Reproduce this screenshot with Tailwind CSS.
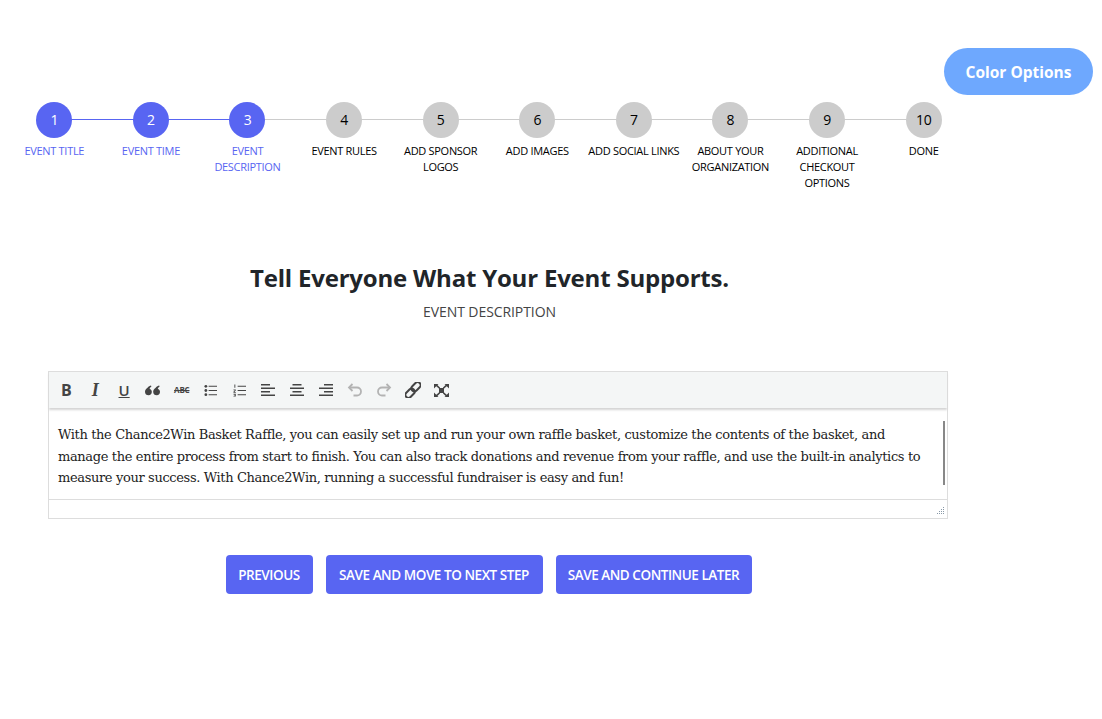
<!DOCTYPE html>
<html lang="en">
<head>
    <meta charset="UTF-8">
    <meta name="viewport" content="width=device-width, initial-scale=1.0">
    <title>Event Description</title>
    <script src="https://cdn.jsdelivr.net/npm/@tailwindcss/browser@4"></script>
</head>
<body class="bg-white min-h-screen font-['Open_Sans','Noto_Sans',sans-serif]">
    <div class="flex justify-end pt-[48px] pr-[9px]">
        <button class="w-[149px] h-[47px] rounded-full bg-[#6ea8fe] text-white text-[15.500px] font-bold pt-[2px]">Color Options</button>
    </div>

    <!-- Steps -->
    <ol class="flex w-[966px] ml-[6px] mt-[7px] text-[11px] leading-[16px] tracking-[-0.3px] text-center">
        <li class="relative flex-1 flex flex-col items-center text-[#5865f2]">
            <div class="absolute top-[17px] left-1/2 w-full h-px bg-[#5865f2]"></div>
            <div class="relative w-[36px] h-[36px] rounded-full bg-[#5865f2] text-white text-[14px] flex items-center justify-center">1</div>
            <p class="mt-[5px] w-[90px]">EVENT TITLE</p>
        </li>
        <li class="relative flex-1 flex flex-col items-center text-[#5865f2]">
            <div class="absolute top-[17px] left-1/2 w-full h-px bg-[#5865f2]"></div>
            <div class="relative w-[36px] h-[36px] rounded-full bg-[#5865f2] text-white text-[14px] flex items-center justify-center">2</div>
            <p class="mt-[5px] w-[90px]">EVENT TIME</p>
        </li>
        <li class="relative flex-1 flex flex-col items-center text-[#5865f2]">
            <div class="absolute top-[17px] left-1/2 w-full h-px bg-[#cccccc]"></div>
            <div class="relative w-[36px] h-[36px] rounded-full bg-[#5865f2] text-white text-[14px] flex items-center justify-center">3</div>
            <p class="mt-[5px] w-[90px]">EVENT DESCRIPTION</p>
        </li>
        <li class="relative flex-1 flex flex-col items-center text-black">
            <div class="absolute top-[17px] left-1/2 w-full h-px bg-[#cccccc]"></div>
            <div class="relative w-[36px] h-[36px] rounded-full bg-[#cccccc] text-[14px] flex items-center justify-center">4</div>
            <p class="mt-[5px] w-[90px]">EVENT RULES</p>
        </li>
        <li class="relative flex-1 flex flex-col items-center text-black">
            <div class="absolute top-[17px] left-1/2 w-full h-px bg-[#cccccc]"></div>
            <div class="relative w-[36px] h-[36px] rounded-full bg-[#cccccc] text-[14px] flex items-center justify-center">5</div>
            <p class="mt-[5px] w-[90px]">ADD SPONSOR LOGOS</p>
        </li>
        <li class="relative flex-1 flex flex-col items-center text-black">
            <div class="absolute top-[17px] left-1/2 w-full h-px bg-[#cccccc]"></div>
            <div class="relative w-[36px] h-[36px] rounded-full bg-[#cccccc] text-[14px] flex items-center justify-center">6</div>
            <p class="mt-[5px] w-[90px]">ADD IMAGES</p>
        </li>
        <li class="relative flex-1 flex flex-col items-center text-black">
            <div class="absolute top-[17px] left-1/2 w-full h-px bg-[#cccccc]"></div>
            <div class="relative w-[36px] h-[36px] rounded-full bg-[#cccccc] text-[14px] flex items-center justify-center">7</div>
            <p class="mt-[5px] w-[96px]">ADD SOCIAL LINKS</p>
        </li>
        <li class="relative flex-1 flex flex-col items-center text-black">
            <div class="absolute top-[17px] left-1/2 w-full h-px bg-[#cccccc]"></div>
            <div class="relative w-[36px] h-[36px] rounded-full bg-[#cccccc] text-[14px] flex items-center justify-center">8</div>
            <p class="mt-[5px] w-[90px]">ABOUT YOUR ORGANIZATION</p>
        </li>
        <li class="relative flex-1 flex flex-col items-center text-black">
            <div class="absolute top-[17px] left-1/2 w-full h-px bg-[#cccccc]"></div>
            <div class="relative w-[36px] h-[36px] rounded-full bg-[#cccccc] text-[14px] flex items-center justify-center">9</div>
            <p class="mt-[5px] w-[80px]">ADDITIONAL CHECKOUT OPTIONS</p>
        </li>
        <li class="relative flex-1 flex flex-col items-center text-black">
            <div class="relative w-[36px] h-[36px] rounded-full bg-[#cccccc] text-[14px] flex items-center justify-center">10</div>
            <p class="mt-[5px] w-[90px]">DONE</p>
        </li>
    </ol>

    <main class="w-[979px] mt-[71px]">
        <h1 class="text-center text-[24px] leading-[32px] font-bold text-[#212529] tracking-[-0.2px]">Tell Everyone What Your Event Supports.</h1>
        <p class="text-center text-[14px] leading-[20px] mt-[8px] tracking-[-0.08px] text-[#444444]">EVENT DESCRIPTION</p>

        <!-- Editor -->
        <div class="ml-[48px] w-[900px] h-[148px] mt-[49px] border border-[#dddddd] flex flex-col">
            <div class="h-[36px] bg-[#f4f6f6] shadow-[0_2px_2px_#d5d5d5] flex items-center pl-[3px] text-[#444444]">
                <span class="w-[28.850px] text-center text-[16px] leading-none font-bold">B</span>
                <span class="w-[28.850px] text-center text-[18px] leading-none font-bold italic font-['Liberation_Serif',serif]">I</span>
                <span class="w-[28.850px] text-center text-[15px] leading-none font-semibold underline">U</span>
                <span class="w-[28.850px] flex justify-center">
                    <svg width="15" height="11" viewBox="1 .5 13.200 9" fill="#444444"><path d="M3.200 2.500C4.200 1.400 5.200.8 6.300.6L6.600 1.800C5.800 2.200 5.200 2.800 5 3.600 6.200 3.800 7 4.800 7 6.200 7 8 5.900 9.200 4.200 9.200 2.300 9.200 1 7.900 1 6 1 4.800 1.600 3.600 3.200 2.500Z"/><path d="M10.400 2.500C11.400 1.400 12.400.8 13.500.6L13.800 1.800C13 2.200 12.400 2.800 12.200 3.600 13.400 3.800 14.200 4.800 14.200 6.200 14.200 8 13.100 9.200 11.400 9.200 9.500 9.200 8.200 7.900 8.200 6 8.200 4.800 8.800 3.600 10.400 2.500Z"/></svg>
                </span>
                <span class="w-[28.850px] text-center text-[8px] font-bold line-through tracking-[-0.2px]">ABC</span>
                <span class="w-[28.850px] flex justify-center">
                    <svg width="13" height="13" viewBox="0 0 14 13" fill="#444444"><circle cx="2" cy="2" r="1.500"/><circle cx="2" cy="6.500" r="1.500"/><circle cx="2" cy="11" r="1.500"/><path d="M5 1.500h9v1H5zM5 6h9v1H5zM5 10.500h9v1H5z"/></svg>
                </span>
                <span class="w-[28.850px] flex justify-center">
                    <svg width="13" height="13" viewBox="0 0 14 13" fill="#444444"><path d="M1.500 0h1v3.500h-1zM.5 5.500h2.500v1l-1.500 1.500h1.500v.8h-2.500v-1l1.500-1.500h-1.500zM.5 10h2.500v3h-2.500v-.7h1.600v-.5h-1.200v-.6h1.200v-.5h-1.600z"/><path d="M5 1.500h9v1H5zM5 6h9v1H5zM5 10.500h9v1H5z"/></svg>
                </span>
                <span class="w-[28.850px] flex justify-center">
                    <svg width="14" height="13" viewBox="0 0 14 13" fill="#444444"><path d="M0 0h9v1.500H0zM0 3.500h14V5H0zM0 7h9v1.500H0zM0 10.500h14V12H0z"/></svg>
                </span>
                <span class="w-[28.850px] flex justify-center">
                    <svg width="14" height="13" viewBox="0 0 14 13" fill="#444444"><path d="M2.500 0h9v1.500h-9zM0 3.500h14V5H0zM2.500 7h9v1.500h-9zM0 10.500h14V12H0z"/></svg>
                </span>
                <span class="w-[28.850px] flex justify-center">
                    <svg width="14" height="13" viewBox="0 0 14 13" fill="#444444"><path d="M5 0h9v1.500H5zM0 3.500h14V5H0zM5 7h9v1.500H5zM0 10.500h14V12H0z"/></svg>
                </span>
                <span class="w-[28.850px] flex justify-center">
                    <svg width="16" height="14" viewBox="0 0 16 14" fill="none" stroke="#b3b3b3" stroke-width="1.800"><path d="M2 4.500h8a4 4 0 0 1 0 8H6.500"/><path d="M5.500 1 2 4.500 5.500 8"/></svg>
                </span>
                <span class="w-[28.850px] flex justify-center">
                    <svg width="16" height="14" viewBox="0 0 16 14" fill="none" stroke="#b3b3b3" stroke-width="1.800"><path d="M14 4.500H6a4 4 0 0 0 0 8h3.500"/><path d="M10.500 1 14 4.500 10.500 8"/></svg>
                </span>
                <span class="w-[28.850px] flex justify-center">
                    <svg width="16" height="16" viewBox="0 0 16 16" fill="none" stroke="#444444" stroke-width="2"><rect x="8" y="-.5" width="6" height="10.500" rx="3" transform="rotate(45 11 4.750)"/><rect x="2" y="6" width="6" height="10.500" rx="3" transform="rotate(45 5 11.250)"/></svg>
                </span>
                <span class="w-[28.850px] flex justify-center">
                    <svg width="15" height="13" viewBox="0 0 15 13" fill="#444444"><path d="M0 0h4.500L3.400 1.100 6 3.500V5.500L2.300 2.200 1.200 3.300 0 4.500zM15 0h-4.500l1.100 1.100L9 3.500V5.500l3.700-3.300 1.100 1.100L15 4.500zM0 13h4.500L3.400 11.900 6 9.500V7.500L2.300 10.800 1.200 9.700 0 8.500zM15 13h-4.500l1.100-1.100L9 9.500V7.500l3.700 3.300 1.100-1.100L15 8.500z"/><rect x="5" y="4" width="5" height="5"/></svg>
                </span>
            </div>
            <div class="relative mt-[3px] h-[88px] pl-[9px] pt-[13px] font-['DejaVu_Serif',serif] text-[13px] leading-[21.500px] tracking-[-0.36px] text-[#222222]">
                <p class="w-[875px]">With the Chance2Win Basket Raffle, you can easily set up and run your own raffle basket, customize the contents of the basket, and manage the entire process from start to finish. You can also track donations and revenue from your raffle, and use the built-in analytics to measure your success. With Chance2Win, running a successful fundraiser is easy and fun!</p>
                <div class="absolute right-[2px] top-[10px] w-[2px] h-[64px] bg-[#888888]"></div>
            </div>
            <div class="relative flex-1 border-t border-[#dddddd]">
                <svg class="absolute right-[2px] bottom-[3px]" width="9" height="8" viewBox="0 0 9 8" fill="#8a9aa8"><path d="M7 0h1v1H7zM5 2h1v1H5zM7 2h1v1H7zM3 4h1v1H3zM5 4h1v1H5zM7 4h1v1H7zM1 6h1v1H1zM3 6h1v1H3zM5 6h1v1H5zM7 6h1v1H7z"/></svg>
            </div>
        </div>

        <div class="flex justify-center gap-[13px] mt-[36px] pr-[2px] text-white text-[13.500px] font-semibold tracking-[-0.45px]">
            <button class="h-[39px] w-[87px] rounded-[4px] bg-[#5865f2] pt-[1px]">PREVIOUS</button>
            <button class="h-[39px] w-[217px] rounded-[4px] bg-[#5865f2] pt-[1px]">SAVE AND MOVE TO NEXT STEP</button>
            <button class="h-[39px] w-[196px] rounded-[4px] bg-[#5865f2] pt-[1px]">SAVE AND CONTINUE LATER</button>
        </div>
    </main>
</body>
</html>
